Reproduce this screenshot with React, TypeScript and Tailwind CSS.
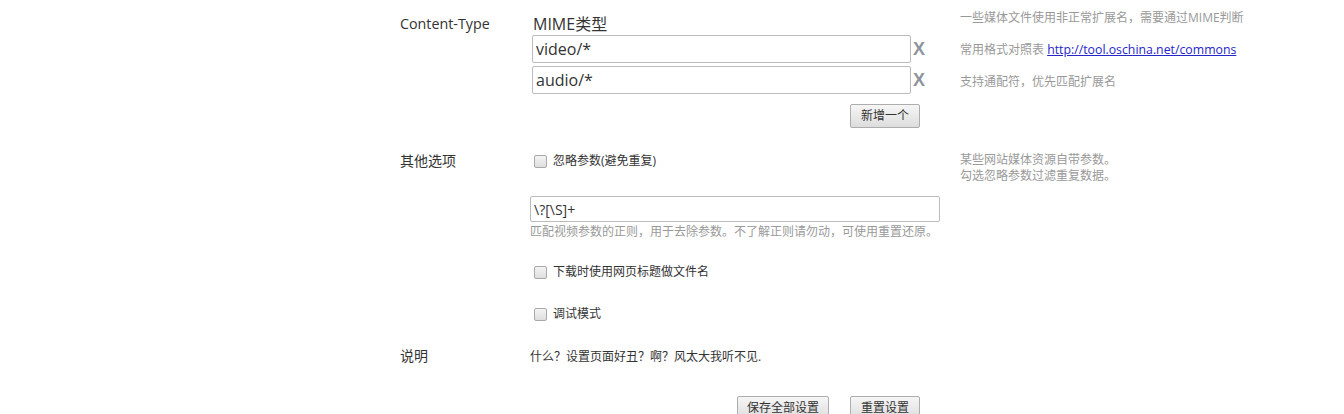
import React from 'react'

const font = { fontFamily: '"Open Sans", "Noto Sans CJK SC", sans-serif' }

function CheckRow({ label }: { label: string }) {
    return (
        <label className="flex h-[20px] items-center pl-[4px] gap-[6px] text-[12px] text-[#333]">
            <span className="w-[13px] h-[13px] rounded-[2px] border border-[#a9a9a9] bg-gradient-to-b from-[#f4f4f4] to-[#dedede]"></span>
            <span>{label}</span>
        </label>
    )
}

function Btn({ text, w }: { text: string, w: string }) {
    return (
        <button className={`${w} h-[24px] rounded-[2px] border border-[#adadad] bg-gradient-to-b from-[#f6f6f6] to-[#dddddd] text-[12px] text-[#333] leading-[22px]`}>
            {text}
        </button>
    )
}

export default function App() {
    return (
        <div className="w-[1344px] h-[414px] overflow-hidden bg-white" style={font}>
            <div className="pl-[400px] pt-[2px]">

                {/* Content-Type */}
                <div className="flex items-start">
                    <div className="w-[130px] mt-[12px] text-[14.3px] leading-[20px] text-[#333]">Content-Type</div>
                    <div className="w-[430px] mt-[11px]">
                        <div className="pl-[3px] text-[16px] leading-[22px] text-[#333]">MIME类型</div>
                        <div className="flex items-center ml-[2px]">
                            <input readOnly value="video/*" className="w-[379px] h-[28px] border border-[#bbb] rounded-[2px] px-[3px] text-[16px] text-[#333] outline-none" />
                            <span className="ml-[2px] text-[18px] font-bold text-[#8e949b] leading-none" style={{ fontFamily: '"Liberation Sans", sans-serif' }}>X</span>
                        </div>
                        <div className="flex items-center ml-[2px] mt-[3px]">
                            <input readOnly value="audio/*" className="w-[379px] h-[28px] border border-[#bbb] rounded-[2px] px-[3px] text-[16px] text-[#333] outline-none" />
                            <span className="ml-[2px] text-[18px] font-bold text-[#8e949b] leading-none" style={{ fontFamily: '"Liberation Sans", sans-serif' }}>X</span>
                        </div>
                        <div className="mt-[8px] pl-[320px]">
                            <Btn text="新增一个" w="w-[70px]" />
                        </div>
                    </div>
                    <div className="text-[12px] leading-[32px] text-[#999]">
                        <div>一些媒体文件使用非正常扩展名，需要通过MIME判断</div>
                        <div>常用格式对照表 <a href="#" className="text-[12.3px] text-[#2525c8] underline">http://tool.oschina.net/commons</a></div>
                        <div>支持通配符，优先匹配扩展名</div>
                    </div>
                </div>

                {/* 其他选项 */}
                <div className="flex items-start mt-[23px]">
                    <div className="w-[130px] text-[14px] leading-[20px] text-[#333]">其他选项</div>
                    <div className="w-[430px]">
                        <CheckRow label="忽略参数(避免重复)" />
                        <input readOnly value="\?[\S]+" className="mt-[25px] w-[410px] h-[26px] border border-[#bbb] rounded-[2px] px-[3px] text-[14px] text-[#333] outline-none" />
                        <div className="text-[12px] leading-[20px] text-[#999]">匹配视频参数的正则，用于去除参数。不了解正则请勿动，可使用重置还原。</div>
                        <div className="mt-[20px]">
                            <CheckRow label="下载时使用网页标题做文件名" />
                        </div>
                        <div className="mt-[22px]">
                            <CheckRow label="调试模式" />
                        </div>
                    </div>
                    <div className="mt-[1px] text-[12px] leading-[16px] text-[#999]">
                        <div>某些网站媒体资源自带参数。</div>
                        <div>勾选忽略参数过滤重复数据。</div>
                    </div>
                </div>

                {/* 说明 */}
                <div className="flex items-start mt-[23px]">
                    <div className="w-[130px] -mt-[1px] text-[14px] leading-[20px] text-[#333]">说明</div>
                    <div className="text-[12px] leading-[20px] text-[#333]">什么？设置页面好丑？啊？风太大我听不见.</div>
                </div>

                <div className="flex gap-[21px] pl-[337px] mt-[29px]">
                    <Btn text="保存全部设置" w="w-[92px]" />
                    <Btn text="重置设置" w="w-[70px]" />
                </div>

            </div>
        </div>
    )
}
